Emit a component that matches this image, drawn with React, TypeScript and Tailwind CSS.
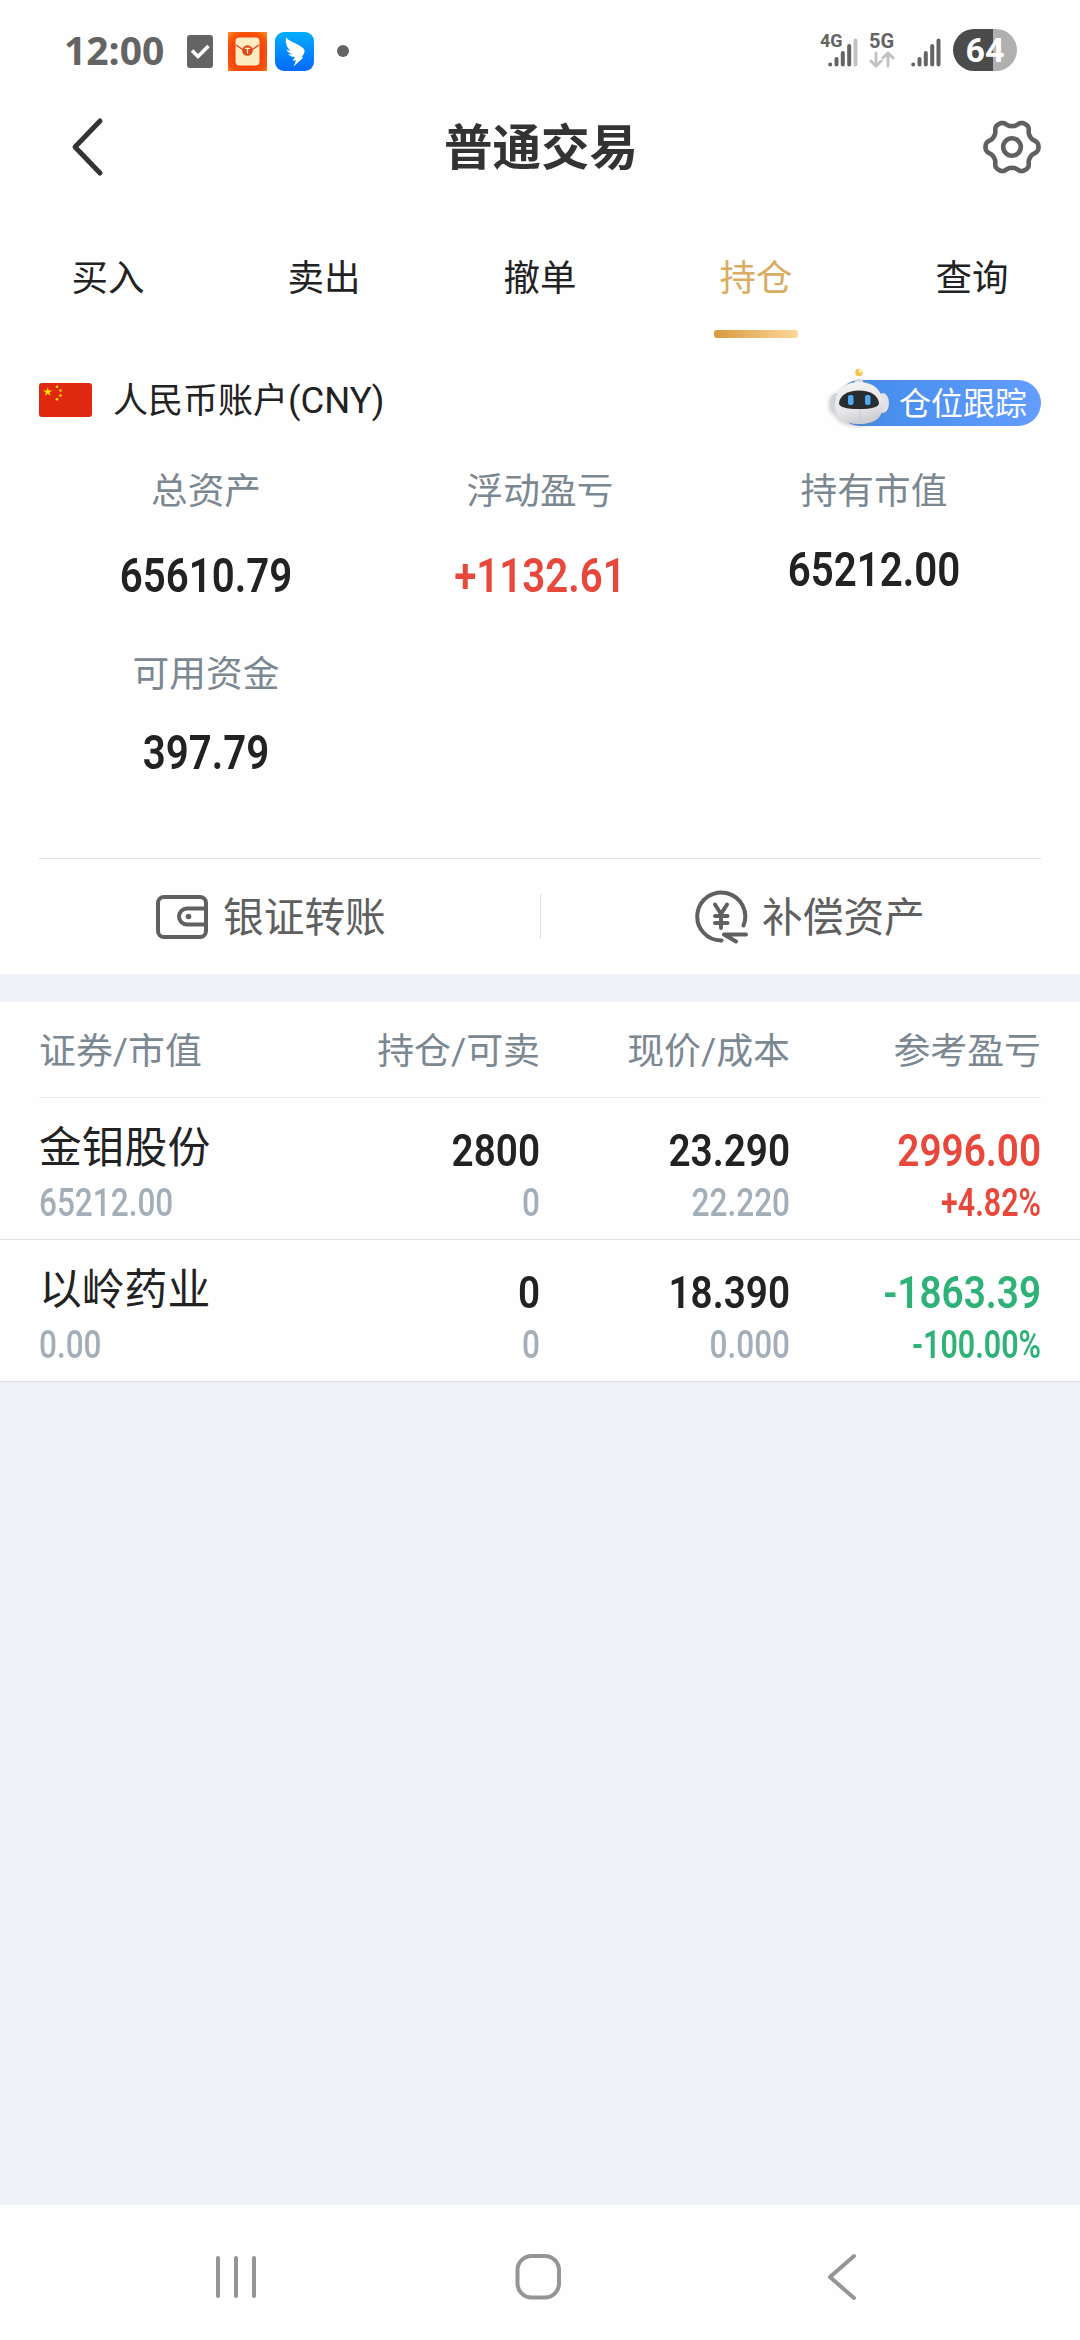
import React from 'react';
import clsx from 'clsx';

const tabs = ['买入', '卖出', '撤单', '持仓', '查询'];

const summary = [
  { label: '总资产', value: '65610.79', gap: 'mt-[28px]', color: 'text-[#222222]' },
  { label: '浮动盈亏', value: '+1132.61', gap: 'mt-[28px]', color: 'text-[#e8483b]' },
  { label: '持有市值', value: '65212.00', gap: 'mt-[22px]', color: 'text-[#222222]' },
  { label: '可用资金', value: '397.79', gap: 'mt-[22px]', color: 'text-[#222222]' },
];

const holdings = [
  {
    name: '金钼股份',
    marketValue: '65212.00',
    amount: '2800',
    sellable: '0',
    price: '23.290',
    cost: '22.220',
    profit: '2996.00',
    rate: '+4.82%',
    color: 'text-[#e8483b]',
  },
  {
    name: '以岭药业',
    marketValue: '0.00',
    amount: '0',
    sellable: '0',
    price: '18.390',
    cost: '0.000',
    profit: '-1863.39',
    rate: '-100.00%',
    color: 'text-[#2fb277]',
  },
];

// Six-toothed outline, sampled in polar coordinates
const gearPoints = Array.from({ length: 120 }, (_, i) => {
  const a = (i / 120) * Math.PI * 2;
  const r = 23.7 + 2.8 * Math.tanh(1.3 * Math.cos(6 * a)) / Math.tanh(1.3);
  return `${(30 + r * Math.cos(a)).toFixed(2)},${(30 + r * Math.sin(a)).toFixed(2)}`;
}).join(' ');

const StatusBar: React.FC = () => (
  <div className="flex h-[102px] items-center pl-[64px] pr-[63px]">
    <span className="mb-[4px] w-[100px] whitespace-nowrap font-['Open_Sans'] text-[39px] font-bold leading-none text-[#646464]">12:00</span>
    <svg className="ml-[23px] h-[33px] w-[26px]" viewBox="0 0 26 33">
      <rect width="26" height="33" rx="3" fill="#646464" />
      <path d="M5 15.500l6 6L21.500 11" fill="none" stroke="#fff" strokeWidth="3.6" />
    </svg>
    <svg className="ml-[15px] size-[39px]" viewBox="0 0 39 39">
      <defs>
        <radialGradient id="mailBg" cx="0.5" cy="0.55" r="0.7">
          <stop offset="0.5" stopColor="#f5400c" />
          <stop offset="0.8" stopColor="#f9560a" />
          <stop offset="1" stopColor="#fb8a1c" />
        </radialGradient>
      </defs>
      <rect width="39" height="39" fill="url(#mailBg)" />
      <rect x="7.500" y="5.500" width="24" height="28" rx="4" fill="#fdecc0" />
      <path d="M8 13l8 5.500M31 13l-8 5.500" stroke="#e0471c" strokeWidth="1.400" />
      <circle cx="19.500" cy="18.500" r="5.300" fill="#e0471c" />
      <path d="M16.800 16.300h5.400M19.500 16.300v5.500" stroke="#fdecc0" strokeWidth="1.300" />
    </svg>
    <svg className="ml-[8px] size-[39px]" viewBox="0 0 39 39">
      <defs>
        <linearGradient id="wingBg" x1="0" y1="0" x2="0" y2="1">
          <stop stopColor="#04aefc" />
          <stop offset="1" stopColor="#0468fb" />
        </linearGradient>
      </defs>
      <rect width="39" height="39" rx="9" fill="url(#wingBg)" />
      <path
        d="M11 5c2 4 10 6 15 9.500 4 2.500 4 4.500 3 7l-2.500 4h2l-10 9 2.500-6h-3.500l2.500-3.500c-3 0-5.500-1-7-3 1.500.5 3 .6 4 .3-3-1-4.800-2.500-5.600-4.700 1.500.9 3 1.200 4.200 1.100C12.500 16.500 10 12 11 5z"
        fill="#fff"
      />
    </svg>
    <span className="ml-[23px] size-[12px] rounded-full bg-[#646464]" />

    <div className="ml-auto flex items-center">
      <div className="relative h-[36px] w-[38px]">
        <span className="absolute left-0 top-0 font-['Roboto'] text-[18px] font-bold leading-[16px] text-[#646464]">4G</span>
        <svg className="absolute left-[8px] top-[4px] h-[30px] w-[30px]" viewBox="0 0 30 30" strokeWidth="4" strokeLinecap="round">
          <path d="M2.200 27.500v.1M8.500 22v5.500M14.800 16v11.500M21.200 9v18.500" stroke="#646464" />
          <path d="M27.500 3.500v24" stroke="#c2c2c2" />
        </svg>
      </div>
      <div className="ml-[11px] flex h-[36px] w-[26px] flex-col">
        <span className="font-['Roboto'] text-[20px] font-bold leading-[17px] text-[#646464]">5G</span>
        <svg className="mt-[1px] h-[17px] w-[26px]" viewBox="0 0 26 17" fill="none" stroke="#c2c2c2" strokeWidth="2.800" strokeLinecap="round">
          <path d="M7 2v13M1.800 10L7 15l5.200-5M19 15V2M13.800 7L19 2l5.200 5" />
        </svg>
      </div>
      <svg className="ml-[16px] mt-[2px] h-[30px] w-[30px]" viewBox="0 0 30 30" strokeWidth="4" strokeLinecap="round">
        <path d="M2.200 27.500v.1M8.500 22v5.500M14.800 16v11.500M21.200 9v18.500M27.500 3.500v24" stroke="#646464" />
      </svg>
      <div className="ml-[12px] mb-[3px] flex h-[42px] w-[64px] items-center justify-center rounded-full bg-[linear-gradient(90deg,#4b4b4b_63%,#b0b0b0_63%)] font-['Roboto'] text-[34px] font-bold leading-none text-white">
        64
      </div>
    </div>
  </div>
);

const Header: React.FC = () => (
  <header className="flex h-[90px] items-center justify-between pl-[70px] pr-[38px]">
    <svg className="h-[60px] w-[30px] overflow-visible" viewBox="0 0 30 60">
      <path d="M30 4L5 30l25 26" fill="none" stroke="#333" strokeWidth="5" strokeLinecap="round" strokeLinejoin="round" />
    </svg>
    <h1 className="mt-[4px] text-[48.5px] font-bold leading-none text-[#333333]">普通交易</h1>
    <svg className="size-[60px]" viewBox="0 0 60 60" fill="none" stroke="#606060" strokeWidth="4.600">
      <polygon points={gearPoints} strokeLinejoin="round" />
      <circle cx="30" cy="30" r="8.800" />
    </svg>
  </header>
);

const Robot: React.FC = () => (
  <svg className="absolute -left-[11px] -top-[13px] h-[68px] w-[70px]" viewBox="0 0 70 68">
    <defs>
      <linearGradient id="robotHead" x1="0" y1="0" x2="0.3" y2="1">
        <stop stopColor="#f4f4f5" />
        <stop offset="0.7" stopColor="#e6e6e8" />
        <stop offset="1" stopColor="#cfd0d4" />
      </linearGradient>
      <filter id="robotShadow" x="-20%" y="-20%" width="140%" height="140%">
        <feDropShadow dx="-1" dy="2" stdDeviation="2" floodColor="#777" floodOpacity="0.4" />
      </filter>
    </defs>
    <g filter="url(#robotShadow)">
      <rect x="29" y="12" width="8" height="8" rx="2" fill="#d9d9dc" />
      <ellipse cx="10" cy="36" rx="6" ry="10" fill="#d3d4d7" />
      <ellipse cx="57" cy="36" rx="6" ry="10" fill="#dfe1e6" />
      <path d="M33 15c15 0 24 9 24 23 0 13-9 19-24 19S9 51 9 38c0-14 9-23 24-23z" fill="url(#robotHead)" />
    </g>
    <circle cx="33" cy="5.500" r="3.800" fill="#f7c34a" />
    <circle cx="34.500" cy="4" r="2" fill="#fff0b5" />
    <path d="M33 23.500c12 0 19 5 20 12.500 0 4-7 6-20 6s-20-2-20-6c1-7.500 8-12.500 20-12.500z" fill="#292c30" />
    <rect x="22" y="28" width="5.500" height="10" rx="2" fill="#4fa9f2" />
    <rect x="39" y="28" width="5.500" height="10" rx="2" fill="#4fa9f2" />
    <path d="M34 42v15" stroke="#cbccd0" />
  </svg>
);

const Account: React.FC = () => (
  <div className="flex h-[124px] items-center justify-between px-[39px]">
    <div className="flex items-center">
      <svg className="h-[34px] w-[53px]" viewBox="0 0 53 34">
        <rect width="53" height="34" rx="3" fill="#de2910" />
        <g fill="#ffde00">
          <path d="M8.700 4.200l1.100 3.300h3.500l-2.800 2 1 3.300-2.800-2-2.800 2 1-3.300-2.800-2h3.500z" />
          <circle cx="18" cy="3.800" r="1.300" />
          <circle cx="21.500" cy="7.500" r="1.300" />
          <circle cx="21.500" cy="12.500" r="1.300" />
          <circle cx="18" cy="16.300" r="1.300" />
        </g>
      </svg>
      <span className="ml-[21px] mt-[2px] text-[35px] leading-none text-[#222222]">
        人民币账户<span className="text-[36.5px]">(CNY)</span>
      </span>
    </div>
    <div className="relative mt-[6px] flex h-[46px] w-[204px] items-center justify-end rounded-full bg-gradient-to-r from-[#3f8ae8] to-[#639dff] pr-[14px] pt-[2px] text-[32px] leading-none text-white">
      <Robot />
      仓位跟踪
    </div>
  </div>
);

const Summary: React.FC = () => (
  <div className="mx-[39px] grid h-[396px] grid-cols-3 grid-rows-[183px_213px] pt-[2px]">
    {summary.map((item) => (
      <div key={item.label} className="text-center">
        <div className="text-[36.7px] leading-[56px] text-[#7b8791]">{item.label}</div>
        <div className={clsx('scale-x-[0.83] text-[48.5px] font-semibold leading-[56px]', item.gap, item.color)}>{item.value}</div>
      </div>
    ))}
  </div>
);

const Actions: React.FC = () => (
  <div className="mx-[39px] flex h-[116px] items-center border-t border-[#e0e0e0] text-[40.7px] leading-none text-[#5f5f5f]">
    <div className="flex w-[501px] items-center pl-[116px]">
      <svg className="mr-[14px] h-[46px] w-[54px]" viewBox="0 0 54 46" fill="none" stroke="#606060" strokeWidth="4">
        <rect x="3" y="3" width="48" height="40" rx="6" />
        <path d="M51 14.500H32a8 8 0 000 16h19" />
        <circle cx="33.500" cy="22.500" r="2.800" fill="#606060" stroke="none" />
      </svg>
      <span className="mt-[3px]">银证转账</span>
    </div>
    <div className="h-[45px] w-px bg-[#dddddd]" />
    <div className="flex w-[500px] items-center pl-[153px]">
      <svg className="mr-[14px] h-[54px] w-[54px]" viewBox="0 0 54 54" fill="none" stroke="#606060" strokeWidth="4" strokeLinecap="round" strokeLinejoin="round">
        <path d="M49.500 35.500A24 24 0 1027.500 50.500" />
        <path d="M21 14.500l6 9.500 6-9.500M27 24v14M21 26h12.500M21 33h12.500" />
        <path d="M42 51.500L30 44.500h22" />
      </svg>
      <span className="mt-[3px]">补偿资产</span>
    </div>
  </div>
);

const columns = 'grid grid-cols-[1fr_251px_250px_251px]';

const Main: React.FC<{ value: string }> = ({ value }) => (
  <div className="-mb-[3px] origin-right scale-x-[0.86] pt-[3px] text-[45px] font-semibold leading-[50px]">{value}</div>
);

const Sub: React.FC<{ value: string; className?: string }> = ({ value, className }) => (
  <div className={clsx('mt-[10px] text-[38px] leading-[40px]', className)}>{value}</div>
);

const Holdings: React.FC = () => (
  <div className="bg-[#fefefe]">
    <div className={clsx(columns, 'mx-[39px] h-[96px] items-center border-b border-[#eeeeee] pt-[6px] text-right text-[36.9px] leading-none text-[#7b8791]')}>
      <span className="text-left">证券/市值</span>
      <span>持仓/可卖</span>
      <span>现价/成本</span>
      <span>参考盈亏</span>
    </div>
    {holdings.map((row) => (
      <div key={row.name} className={clsx(columns, 'h-[142px] border-b border-[#dddfe1] px-[39px] pt-[25px] text-right text-[#222222]')}>
        <div className="text-left">
          <div className="text-[42.8px] leading-[50px]">{row.name}</div>
          <Sub value={row.marketValue} className="origin-left scale-x-[0.83] font-medium text-[#a3aeb9]" />
        </div>
        <div>
          <Main value={row.amount} />
          <Sub value={row.sellable} className="origin-right scale-x-[0.83] font-medium text-[#a3aeb9]" />
        </div>
        <div>
          <Main value={row.price} />
          <Sub value={row.cost} className="origin-right scale-x-[0.83] font-medium text-[#a3aeb9]" />
        </div>
        <div className={row.color}>
          <Main value={row.profit} />
          <Sub value={row.rate} className="origin-right scale-x-[0.8] font-semibold" />
        </div>
      </div>
    ))}
  </div>
);

const NavBar: React.FC = () => (
  <nav className="flex h-[135px] items-center justify-between bg-[#fefefe] px-[206px] pt-[9px]">
    <svg className="size-[60px]" viewBox="0 0 60 60" stroke="#959595" strokeWidth="4" strokeLinecap="round">
      <path d="M12 11v38M30 11v38M48 11v38" />
    </svg>
    <svg className="size-[60px]" viewBox="0 0 60 60" fill="none" stroke="#959595" strokeWidth="4">
      <rect x="7.500" y="9" width="41.500" height="41.500" rx="14" />
    </svg>
    <svg className="size-[60px]" viewBox="0 0 60 60" fill="none" stroke="#959595" strokeWidth="4" strokeLinecap="round" strokeLinejoin="round">
      <path d="M40 9L16 30l24 21" />
    </svg>
  </nav>
);

export default function App() {
  return (
    <div className="flex h-[2340px] w-[1080px] flex-col overflow-hidden bg-[#eef1f5] font-['Roboto','Noto_Sans_CJK_SC',sans-serif]">
      <div className="bg-[#fefefe]">
        <StatusBar />
        <Header />
        <div className="grid h-[146px] grid-cols-5">
          {tabs.map((tab) => (
            <div key={tab} className="flex flex-col items-center pt-[59px]">
              <span className={clsx('text-[36.5px] leading-[56px]', tab === '持仓' ? 'text-[#d9ac62]' : 'text-[#222222]')}>{tab}</span>
              {tab === '持仓' && <div className="mt-[23px] h-[8px] w-[84px] rounded-[3px] bg-gradient-to-r from-[#d99a3d] to-[#fcd898]" />}
            </div>
          ))}
        </div>
        <Account />
        <Summary />
        <Actions />
      </div>
      <div className="h-[28px]" />
      <Holdings />
      <div className="flex-1" />
      <NavBar />
    </div>
  );
}
